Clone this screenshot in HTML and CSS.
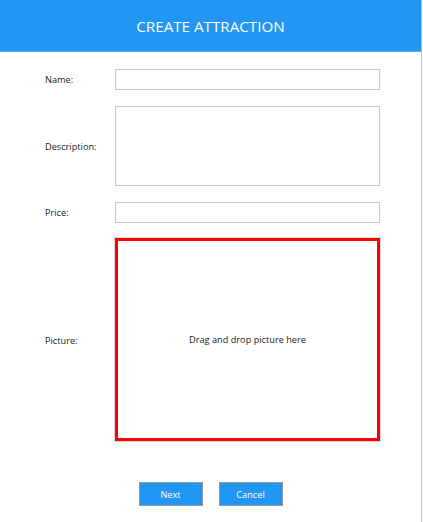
FILE: index.html
```html
<!DOCTYPE html>
<html>
<head>
<meta charset="utf-8">
<link rel="stylesheet" href="styles.css">
</head>
<body>
<div class="window">
  <header class="header">
    <h1 class="title">CREATE ATTRACTION</h1>
  </header>
  <form class="form">
    <label class="label">Name:</label>
    <div class="input"></div>
    <label class="label">Description:</label>
    <div class="input textarea"></div>
    <label class="label">Price:</label>
    <div class="input"></div>
    <label class="label">Picture:</label>
    <div class="drop"><span>Drag and drop picture here</span></div>
  </form>
  <div class="actions">
    <button class="btn" type="button">Next</button>
    <button class="btn" type="button">Cancel</button>
  </div>
</div>
</body>
</html>
```

FILE: styles.css
```css
html, body {
  margin: 0;
  padding: 0;
  background: #ffffff;
}
body {
  font-family: "Open Sans", "Noto Sans", sans-serif;
  color: #1b1b1b;
}
.window {
  width: 421px;
  height: 522px;
  border-right: 1px solid #bdbdbd;
  background: #fff;
}
.header {
  height: 51px;
  background: #2196f3;
  border-bottom: 1px solid #5eb1f6;
  display: flex;
  align-items: center;
  justify-content: center;
}
.title {
  margin: 0;
  font-weight: 400;
  font-size: 15.2px;
  color: #ffffff;
  letter-spacing: 0;
}
.form {
  display: grid;
  grid-template-columns: 70px 265px;
  grid-template-rows: 21px 80px 21px 202px;
  row-gap: 16px;
  padding: 17px 0 0 45px;
}
.label {
  font-size: 9.2px;
  align-self: center;
}
.input {
  box-sizing: border-box;
  border: 1px solid #c8c8c8;
  background: #fff;
}
.drop {
  box-sizing: border-box;
  border: 3px solid #ff0000;
  box-shadow: 0 0 0 1px #d8d8d8;
  display: flex;
  align-items: center;
  justify-content: center;
  font-size: 9.2px;
  margin-top: -1px;
}
.actions {
  display: flex;
  justify-content: center;
  gap: 16px;
  margin-top: 41px;
}
.btn {
  width: 64px;
  height: 24px;
  background: #2196f3;
  border: 1px solid #8f9aa6;
  color: #ffffff;
  font-family: "Open Sans", "Noto Sans", sans-serif;
  font-size: 9.2px;
  padding: 0;
}
```
